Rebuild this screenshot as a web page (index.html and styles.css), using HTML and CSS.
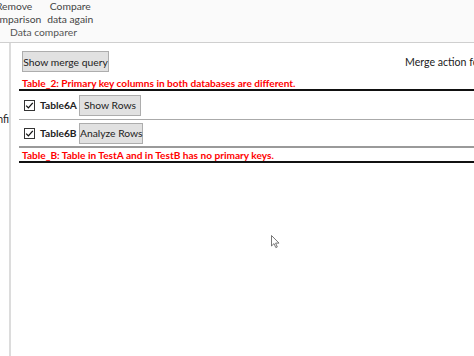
FILE: index.html
```html
<!DOCTYPE html>
<html>
<head>
<meta charset="utf-8">
<link rel="stylesheet" href="styles.css">
</head>
<body>
<div class="ribbon">
  <div class="ribbon-buttons">
    <div class="rb rb-first">Remove<br>Comparison</div>
    <div class="rb">Compare<br>data again</div>
  </div>
  <div class="ribbon-group">Data comparer</div>
</div>
<div class="main">
  <div class="left"><span class="left-label">Confi</span></div>
  <div class="content">
    <div class="toolbar">
      <button class="btn btn-merge">Show merge query</button>
      <span class="merge-action">Merge action fo</span>
    </div>
    <div class="error">Table_2: Primary key columns in both databases are different.</div>
    <div class="row">
      <span class="check"><svg width="11" height="11" viewBox="0 0 11 11"><rect x="0.5" y="0.5" width="10" height="10" fill="#fff" stroke="#333"/><path d="M2.2 5.6 L4.4 7.9 L8.8 2.8" fill="none" stroke="#111" stroke-width="1.3"/></svg></span>
      <span class="tname">Table6A</span>
      <button class="btn btn-rows">Show Rows</button>
    </div>
    <div class="row row-last">
      <span class="check"><svg width="11" height="11" viewBox="0 0 11 11"><rect x="0.5" y="0.5" width="10" height="10" fill="#fff" stroke="#333"/><path d="M2.2 5.6 L4.4 7.9 L8.8 2.8" fill="none" stroke="#111" stroke-width="1.3"/></svg></span>
      <span class="tname">Table6B</span>
      <button class="btn btn-analyze">Analyze Rows</button>
    </div>
    <div class="error error-last">Table_B: Table in TestA and in TestB has no primary keys.</div>
  </div>
</div>
<svg class="cursor" width="10" height="14" viewBox="0 0 10 14"><path d="M0.5 0.5 L0.5 11 L3 8.6 L4.8 12.6 L6.3 12 L4.6 8.1 L8 8.1 Z" fill="#fff" stroke="#555" stroke-width="0.8"/></svg>
</body>
</html>
```
FILE: styles.css
```css
html, body {
  margin: 0;
  padding: 0;
  background: #fff;
  font-family: Lato, "Liberation Sans", sans-serif;
  color: #222;
  width: 474px;
  height: 356px;
  overflow: hidden;
}
.ribbon {
  height: 43px;
  background: #fafafa;
  border-bottom: 1px solid #cfcfcf;
  box-sizing: border-box;
  font-size: 10.3px;
  color: #444;
}
.ribbon-buttons {
  display: flex;
  padding-top: 0;
  line-height: 13px;
}
.rb {
  text-align: center;
  margin-right: 6px;
}
.rb-first {
  margin-left: -13px;
}
.ribbon-group {
  padding-left: 10px;
  padding-top: 0;
  line-height: 13px;
  color: #555;
}
.main {
  display: flex;
  height: 313px;
}
.left {
  width: 9px;
  border-right: 2px solid #dcdcdc;
  overflow: hidden;
  font-size: 10.5px;
}
.left-label {
  display: block;
  direction: rtl;
  white-space: nowrap;
  margin-top: 70px;
  width: 9px;
}
.content {
  flex: 1;
  padding-left: 8px;
}
.toolbar {
  display: flex;
  align-items: center;
  justify-content: space-between;
  padding: 8px 0 0 3px;
  height: 21px;
}
.btn {
  font-family: Lato, "Liberation Sans", sans-serif;
  font-size: 10.3px;
  background: #e1e1e1;
  border: 1px solid #adadad;
  color: #222;
  padding: 0;
  height: 21px;
  box-sizing: border-box;
  border-radius: 0;
  white-space: nowrap;
}
.btn-merge {
  width: 87px;
}
.merge-action {
  font-size: 10.6px;
  color: #222;
  white-space: nowrap;
  width: 69px;
  overflow: hidden;
}
.error {
  color: #f00;
  font-weight: bold;
  font-size: 10.1px;
  padding: 6px 0 0 3px;
  line-height: 11px;
  border-bottom: 2px solid #111;
  white-space: nowrap;
  overflow: hidden;
}
.error-last {
  padding-top: 2px;
}
.row {
  display: flex;
  align-items: center;
  height: 28px;
  padding-left: 5px;
  border-bottom: 1px solid #aaa;
}
.row-last {
  height: 26px;
  border-bottom: 2px solid #9a9a9a;
}
.check {
  display: flex;
  width: 11px;
  height: 11px;
  margin-right: 5px;
}
.tname {
  font-weight: bold;
  font-size: 10.2px;
  margin-right: 4px;
  width: 35px;
  white-space: nowrap;
}
.btn-rows {
  width: 62px;
}
.btn-analyze {
  width: 64px;
}
.cursor {
  position: absolute;
  left: 271px;
  top: 235px;
}
```
